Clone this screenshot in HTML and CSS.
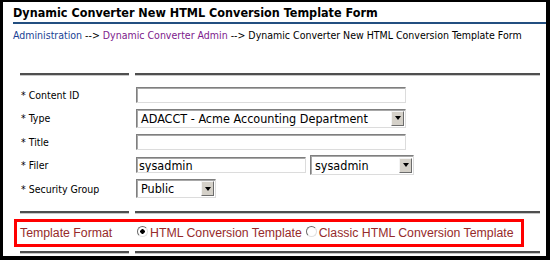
FILE: index.html
```html
<!DOCTYPE html>
<html lang="en">
<head>
  <meta charset="UTF-8">
  <title>Dynamic Converter New HTML Conversion Template Form</title>
  <link rel="stylesheet" href="styles.css">
</head>
<body>

  <div class="frame">

    <div class="header">
      <h1 class="title">Dynamic Converter New HTML Conversion Template Form</h1>
    </div>

    <div class="crumbs">
      <a href="#" class="crumb-link">Administration</a> --&gt;
      <a href="#" class="crumb-link visited">Dynamic Converter Admin</a> --&gt;
      Dynamic Converter New HTML Conversion Template Form
    </div>

    <div class="form">
      <div class="rule"><span></span><span></span></div>

      <div class="fields">
        <div class="row">
          <label class="label" for="cid">* Content ID</label>
          <div class="ctrl"><input type="text" id="cid" class="text wide"></div>
        </div>
        <div class="row">
          <label class="label">* Type</label>
          <div class="ctrl">
            <div class="select wide">
              <span class="select-value">ADACCT - Acme Accounting Department</span>
              <span class="select-btn"><i class="arrow"></i></span>
            </div>
          </div>
        </div>
        <div class="row">
          <label class="label" for="ttl">* Title</label>
          <div class="ctrl"><input type="text" id="ttl" class="text wide"></div>
        </div>
        <div class="row">
          <label class="label" for="filer">* Filer</label>
          <div class="ctrl">
            <input type="text" id="filer" class="text filer" value="sysadmin">
            <div class="select filer-pick">
              <span class="select-value">sysadmin</span>
              <span class="select-btn"><i class="arrow"></i></span>
            </div>
          </div>
        </div>
        <div class="row">
          <label class="label">* Security Group</label>
          <div class="ctrl">
            <div class="select group">
              <span class="select-value">Public</span>
              <span class="select-btn"><i class="arrow"></i></span>
            </div>
          </div>
        </div>
      </div>

      <div class="rule"><span></span><span></span></div>

      <div class="format-row">
        <span class="format-label">Template Format</span>
        <div class="format-opts">
          <label class="opt"><input type="radio" name="fmt" class="radio" checked>HTML Conversion Template</label>
          <label class="opt"><input type="radio" name="fmt" class="radio">Classic HTML Conversion Template</label>
        </div>
      </div>

      <div class="rule"><span></span><span></span></div>
    </div>

  </div>

</body>
</html>
```

FILE: styles.css
```css
body {
  margin: 0;
  font-family: "DejaVu Sans Condensed", "DejaVu Sans", sans-serif;
  font-size: 10.5px;
  color: #000;
  background: #fff;
}

.frame {
  width: 550px;
  height: 260px;
  box-sizing: border-box;
  border: solid #000;
  border-width: 2px 4px 4px 3px;
  overflow: hidden;
}

.header {
  margin-left: 10px;
  padding-top: 4px;
  padding-bottom: 2px;
  border-bottom: 2px solid #234f80;
}

.title {
  margin: 0;
  font-size: 12.5px;
  line-height: 14px;
  font-weight: bold;
}

.crumbs {
  margin-left: 10px;
  padding-top: 5px;
  line-height: 13px;
  white-space: nowrap;
}

.crumb-link {
  color: #1a3f94;
  text-decoration: none;
}

.crumb-link.visited {
  color: #7d1a8c;
}

.form {
  margin-top: 31px;
  margin-left: 17px;
}

.rule {
  display: grid;
  grid-template-columns: 109px 405px;
  column-gap: 6px;
}

.rule span {
  height: 0;
  border-top: 2px solid #4f4f4f;
  border-bottom: 1px solid #c8c8c8;
}

.fields {
  padding: 7px 0 10px;
}

.row {
  display: grid;
  grid-template-columns: 109px 405px;
  column-gap: 7px;
  height: 23.5px;
  align-items: center;
}

.label {
  padding-left: 1px;
}

.ctrl {
  display: flex;
  align-items: center;
  gap: 4px;
}

.text,
.select {
  box-sizing: border-box;
  border: 1px solid;
  border-color: #7f7f7f #dcdcdc #dcdcdc #7f7f7f;
  box-shadow: inset 1px 1px #a8a8a8;
  background: #fff;
  font-family: "DejaVu Sans Condensed", "DejaVu Sans", sans-serif;
  font-size: 12.5px;
  color: #000;
}

.text {
  height: 16px;
  padding: 0 2px;
  outline: none;
}

.select {
  height: 19px;
  display: flex;
  align-items: center;
  padding: 0 1px 0 4px;
}

.select-value {
  flex: 1;
  line-height: 15px;
  white-space: nowrap;
}

.select-btn {
  width: 13px;
  height: 15px;
  box-sizing: border-box;
  background: #d4d0c8;
  border: 1px solid;
  border-color: #f4f4f4 #6c6c6c #6c6c6c #f4f4f4;
  display: flex;
  align-items: center;
  justify-content: center;
}

.arrow {
  width: 0;
  height: 0;
  border-left: 3.5px solid transparent;
  border-right: 3.5px solid transparent;
  border-top: 4px solid #000;
}

.wide {
  width: 270px;
}

.filer {
  width: 170px;
}

.filer-pick {
  width: 104px;
  height: 20px;
}

.group {
  width: 80px;
}

.format-row {
  display: grid;
  grid-template-columns: 117px auto;
  align-items: center;
  width: 510px;
  height: 28px;
  box-sizing: border-box;
  margin: 5px 0 4px -6px;
  border: 3px solid #f00;
  padding-left: 3px;
  font-family: "Liberation Sans", Arial, sans-serif;
  font-size: 12.3px;
  color: #962b2b;
}

.format-opts {
  display: flex;
  align-items: center;
  gap: 4px;
}

.opt {
  display: flex;
  align-items: center;
}

.radio {
  appearance: none;
  -webkit-appearance: none;
  width: 11px;
  height: 11px;
  margin: 0 2px 2px 0;
  border-radius: 50%;
  border: 1px solid;
  border-color: #6c6c6c #e0e0e0 #e0e0e0 #6c6c6c;
  background: #fff;
}

.radio:checked {
  background: radial-gradient(circle, #000 0 2px, #fff 2.5px);
}
```
